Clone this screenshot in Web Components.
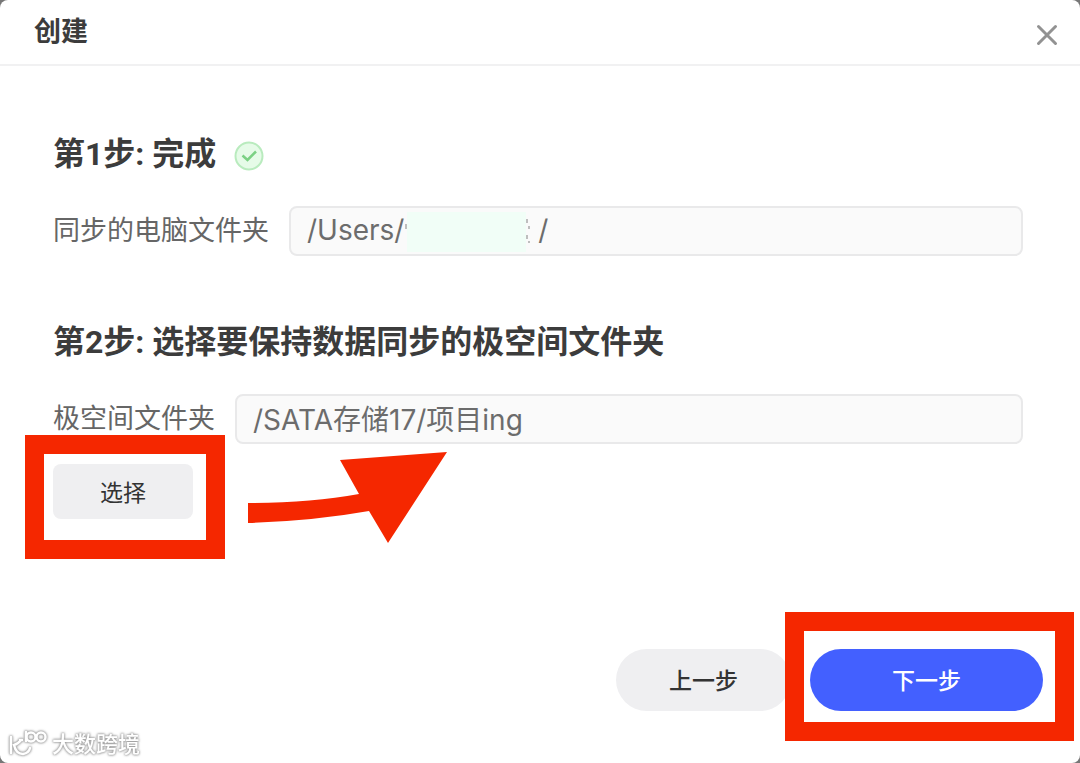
<!DOCTYPE html>
<html lang="zh-CN">
<head>
<meta charset="utf-8">
<meta name="viewport" content="width=device-width, initial-scale=1">
<title>创建</title>
<style>
html{
    background:#777;
}
body{
    margin:0;
    font-family: Inter, "Noto Sans CJK SC", sans-serif;
    color:#3c3c3c;
}
</style>
</head>
<body>
<sync-dialog heading="创建">
    <step-section heading="第1步: 完成" done>
        <path-field label="同步的电脑文件夹" start="/Users/" end="/" masked></path-field>
    </step-section>
    <step-section heading="第2步: 选择要保持数据同步的极空间文件夹">
        <path-field label="极空间文件夹" start="/SATA存储17/项目ing"></path-field>
        <mark-frame class="choose"><action-button kind="small">选择</action-button></mark-frame>
        <mark-arrow></mark-arrow>
    </step-section>
    <action-button slot="footer" kind="plain">上一步</action-button>
    <mark-frame slot="footer" class="next"><action-button kind="primary">下一步</action-button></mark-frame>
    <water-mark slot="mark"></water-mark>
</sync-dialog>

<script>
class SyncDialog extends HTMLElement
{
    constructor() {
        super()
        this._shadowRoot = this.attachShadow({ mode: 'open' })
        this._shadowRoot.innerHTML =
        `<style>
        :host{
            display:flex;
            flex-direction:column;
            position:relative;
            box-sizing:border-box;
            min-height:100vh;
            background:#fff;
            border-radius:8px;
            overflow:hidden;
        }
        header{
            display:flex;
            align-items:center;
            justify-content:space-between;
            height:64px;
            padding:0 22px 0 34px;
            border-bottom:2px solid #f1f1f2;
        }
        h1{
            margin:0;
            font-size:27px;
            line-height:40px;
            font-weight:700;
        }
        .close{
            display:flex;
            margin-top:6px;
            padding:0;
            border:0;
            background:none;
        }
        main{
            display:flex;
            flex-direction:column;
            gap:66px;
            padding:68px 57px 0 53px;
        }
        footer{
            display:flex;
            justify-content:flex-end;
            gap:19px;
            margin-top:auto;
            padding:40px 37px 52px;
        }
        </style>
        <header>
            <h1>${this.getAttribute('heading')}</h1>
            <button class="close" aria-label="关闭">
                <svg width="22" height="22" viewBox="0 0 22 22" fill="none" stroke="#929292" stroke-width="3" stroke-linecap="round"><path d="M2.5 2.5 19.5 19.5M19.5 2.5 2.5 19.5"/></svg>
            </button>
        </header>
        <main><slot></slot></main>
        <footer><slot name="footer"></slot></footer>
        <slot name="mark"></slot>
        `
    }
}
window.customElements.define('sync-dialog', SyncDialog)

class StepSection extends HTMLElement
{
    constructor() {
        super()
        this._shadowRoot = this.attachShadow({ mode: 'open' })
        const tick = this.hasAttribute('done')
            ? `<svg width="30" height="30" viewBox="0 0 30 30" fill="none"><circle cx="15" cy="15" r="13.5" fill="#e6fbe8" stroke="#b9ebbe" stroke-width="2"/><path d="M8.5 14.5 13.5 19 22 10.5" stroke="#7bd184" stroke-width="2.5"/></svg>`
            : ''
        this._shadowRoot.innerHTML =
        `<style>
        :host{
            display:flex;
            flex-direction:column;
            align-items:flex-start;
            gap:20px;
            position:relative;
        }
        .title{
            display:flex;
            align-items:center;
            gap:18px;
            margin-bottom:12px;
        }
        h2{
            margin:0;
            font-family:Roboto, "Noto Sans CJK SC", sans-serif;
            font-size:32px;
            line-height:40px;
            font-weight:700;
        }
        svg{
            margin-top:4px;
        }
        </style>
        <div class="title"><h2>${this.getAttribute('heading')}</h2>${tick}</div>
        <slot></slot>
        `
    }
}
window.customElements.define('step-section', StepSection)

class PathField extends HTMLElement
{
    constructor() {
        super()
        this._shadowRoot = this.attachShadow({ mode: 'open' })
        const masked = this.hasAttribute('masked')
        // the user name is blanked out and covered by the mask
        const blank = masked ? '\u00a0'.repeat(17) : ''
        const value = this.getAttribute('start') + blank + (this.getAttribute('end') || '')
        const mask = masked
            ? `<svg class="mask" width="126" height="40" viewBox="0 0 126 40"><path d="M2 0H121V40H2z" fill="#f1fef7"/><path d="M1 12v5M122 7v4M124 14v3M122 23v4M124 29v2" stroke="#aaa" stroke-width="1.5"/></svg>`
            : ''
        this._shadowRoot.innerHTML =
        `<style>
        :host{
            display:flex;
            align-items:center;
            align-self:stretch;
            gap:20px;
            color:#666;
            font-size:27px;
        }
        label{
            line-height:40px;
            white-space:nowrap;
        }
        .box{
            flex:1;
            display:flex;
            position:relative;
        }
        input{
            flex:1;
            min-width:0;
            box-sizing:border-box;
            height:50px;
            padding:0 16px 2px;
            border:2px solid #e9e9ea;
            border-radius:8px;
            background:#fafafa;
            color:#6c6c6c;
            font:inherit;
            font-size:28px;
        }
        .mask{
            position:absolute;
            left:116px;
            top:6px;
        }
        </style>
        <label for="path">${this.getAttribute('label')}</label>
        <div class="box"><input id="path" type="text" value="${value}" readonly>${mask}</div>
        `
    }
}
window.customElements.define('path-field', PathField)

class ActionButton extends HTMLElement
{
    constructor() {
        super()
        this._shadowRoot = this.attachShadow({ mode: 'open' })
        this._shadowRoot.innerHTML =
        `<style>
        :host{
            display:block;
        }
        button{
            display:block;
            width:175px;
            height:62px;
            padding:0 0 2px;
            border:0;
            border-radius:31px;
            background:#efeff1;
            color:#333;
            font:inherit;
            font-size:23px;
            font-weight:500;
        }
        :host([kind=small]) button{
            width:140px;
            height:55px;
            border-radius:8px;
            font-weight:400;
        }
        :host([kind=primary]) button{
            width:233px;
            background:#4360ff;
            color:#fff;
        }
        </style>
        <button><slot></slot></button>
        `
    }
}
window.customElements.define('action-button', ActionButton)

// red frame drawn around whatever is slotted in
class MarkFrame extends HTMLElement
{
    constructor() {
        super()
        this._shadowRoot = this.attachShadow({ mode: 'open' })
        this._shadowRoot.innerHTML =
        `<style>
        :host{
            display:block;
            position:relative;
        }
        .frame{
            position:absolute;
            inset:-37px -31px -30px -25px;
            border:19px solid #f52700;
            pointer-events:none;
        }
        :host(.choose) .frame{
            inset:-29px -32px -40px -28px;
        }
        </style>
        <slot></slot>
        <div class="frame"></div>
        `
    }
}
window.customElements.define('mark-frame', MarkFrame)

class MarkArrow extends HTMLElement
{
    constructor() {
        super()
        this._shadowRoot = this.attachShadow({ mode: 'open' })
        this._shadowRoot.innerHTML =
        `<style>
        :host{
            display:block;
            position:absolute;
            left:195px;
            bottom:-25px;
            pointer-events:none;
        }
        svg{
            display:block;
        }
        </style>
        <svg width="200" height="92" viewBox="0 0 200 92"><path d="M0 51Q62 51 111 42L92 8 199 0 140 91 121 59Q65 69 0 71z" fill="#f52700"/></svg>
        `
    }
}
window.customElements.define('mark-arrow', MarkArrow)

class WaterMark extends HTMLElement
{
    constructor() {
        super()
        this._shadowRoot = this.attachShadow({ mode: 'open' })
        this._shadowRoot.innerHTML =
        `<style>
        :host{
            display:flex;
            align-items:center;
            gap:4px;
            position:absolute;
            left:8px;
            bottom:3px;
            color:#fff;
            font-size:22px;
            line-height:32px;
            font-weight:500;
            filter:drop-shadow(0 0 1px #999) drop-shadow(0 0 1px #aaa);
        }
        </style>
        <svg width="40" height="32" viewBox="0 0 40 32" fill="none" stroke="#fff" stroke-width="2.5" stroke-linecap="round">
            <path d="M3 9V25M13 12Q10 16 6 17Q8 26 15 26Q21 25 22 20M12 12h2M18 4v9"/>
            <circle cx="23" cy="9" r="4.5"/>
            <circle cx="33" cy="9" r="4.5"/>
        </svg>
        <span>大数跨境</span>
        `
    }
}
window.customElements.define('water-mark', WaterMark)
</script>
</body>
</html>
